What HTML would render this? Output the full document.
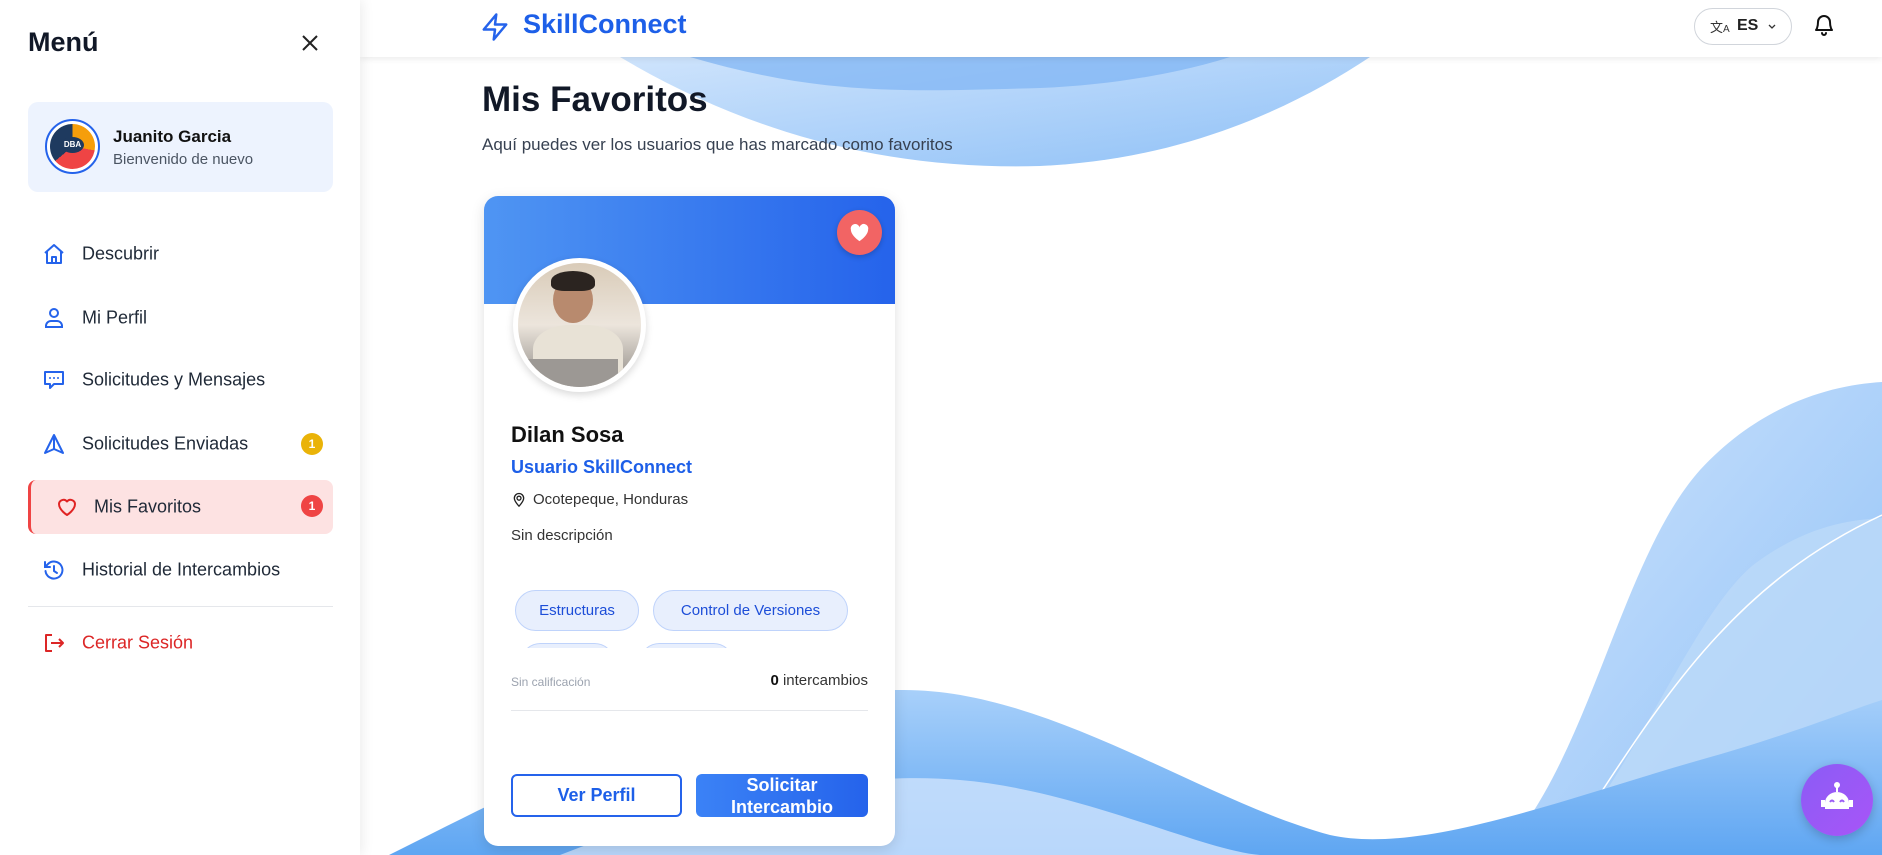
<!DOCTYPE html>
<html><head><meta charset="utf-8"><style>
*{box-sizing:border-box;margin:0;padding:0}
body{width:1882px;height:855px;overflow:hidden;background:#fff;font-family:"Liberation Sans",sans-serif;position:relative;color:#1f2937}
.abs{position:absolute}
.side{left:0;top:0;width:360px;height:855px;background:#fff;box-shadow:2px 0 12px rgba(0,0,0,.08);z-index:5}
.hdr{left:360px;top:0;width:1522px;height:57px;background:#fff;box-shadow:0 2px 6px rgba(0,0,0,.08);z-index:4}
.mi{position:absolute;left:82px;font-size:18px;color:#1f2937;transform:translateY(-50%)}
.ic{position:absolute;transform:translate(-50%,-50%)}
.badge{position:absolute;left:301px;width:22px;height:22px;border-radius:50%;color:#fff;font-size:12px;font-weight:bold;text-align:center;line-height:22px;transform:translateY(-50%)}
.tag{position:absolute;height:41px;border-radius:21px;background:#e8effd;border:1px solid #bfd3fb;color:#1d4ed8;font-size:15px;line-height:39px;text-align:center}
</style></head><body>
<svg class="abs" style="left:0;top:0" width="1882" height="855" viewBox="0 0 1882 855">
<defs>
<linearGradient id="g1" x1="0" y1="0" x2="0" y2="1"><stop offset="0" stop-color="#7fb6f5"/><stop offset="1" stop-color="#cfe4fc"/></linearGradient>
<linearGradient id="g2" x1="0" y1="0" x2="1" y2="1"><stop offset="0" stop-color="#cfe4fc"/><stop offset="1" stop-color="#8ec0f7"/></linearGradient>
<linearGradient id="g3" x1="0" y1="0" x2="0" y2="1"><stop offset="0" stop-color="#a8d0fa"/><stop offset="1" stop-color="#5fa6f2"/></linearGradient>
</defs>
<path d="M620 57 C760 140 900 170 1040 166 C1180 160 1290 110 1370 57 Z" fill="url(#g2)"/>
<path d="M690 57 C820 95 900 92 1040 88 C1120 85 1190 70 1230 57 Z" fill="#7db4f4" opacity=".7"/>
<path d="M1500 855 C1590 760 1620 560 1700 470 C1760 405 1830 385 1882 382 L1882 855 Z" fill="url(#g2)"/>
<path d="M1560 855 C1640 760 1700 600 1760 560 C1810 525 1850 520 1882 518 L1882 855 Z" fill="#bcdaf9" opacity=".8"/>
<path d="M1560 855 C1650 720 1720 590 1882 515" fill="none" stroke="#fff" stroke-width="1.5"/>
<path d="M389 855 C520 790 700 690 904 690 C1050 690 1200 800 1330 835 C1420 855 1560 800 1700 760 C1790 735 1850 710 1882 700 L1882 855 Z" fill="url(#g3)"/>
<path d="M560 855 C700 800 850 770 960 780 C1080 790 1200 850 1260 855 Z" fill="#cfe4fc" opacity=".8"/>
</svg>

<div class="abs hdr">
<svg class="abs" style="left:120px;top:11px" width="30" height="32" viewBox="0 0 24 24" fill="none" stroke="#2563eb" stroke-width="2" stroke-linejoin="round"><path d="M13 2L3 14h9l-1 8 10-12h-9l1-8z"/></svg>
<div class="abs" style="left:163px;top:9px;font-size:27px;font-weight:bold;color:#1d5fe8">SkillConnect</div>
<div class="abs" style="left:1334px;top:8px;width:98px;height:37px;border:1px solid #d1d5db;border-radius:19px">
<div class="abs" style="left:15px;top:8px;font-size:13px;color:#333">文<span style="font-size:10px">A</span></div>
<div class="abs" style="left:42px;top:8px;font-size:16px;font-weight:bold;color:#222">ES</div>
<svg class="abs" style="left:72px;top:14px" width="10" height="8" viewBox="0 0 10 8"><path d="M2 2l3 3 3-3" fill="none" stroke="#333" stroke-width="1.3"/></svg>
</div>
<svg class="abs" style="left:1452px;top:12px" width="24" height="26" viewBox="0 0 24 24" fill="none" stroke="#111" stroke-width="2" stroke-linecap="round" stroke-linejoin="round"><path d="M6 9a6 6 0 0112 0c0 6 2 8 2 8H4s2-2 2-8"/><path d="M10 20a2 2 0 004 0"/></svg>
</div>

<div class="abs side">
<div class="abs" style="left:28px;top:27px;font-size:27px;font-weight:bold;color:#111827">Menú</div>
<svg class="abs" style="left:300px;top:33px" width="20" height="20" viewBox="0 0 20 20"><path d="M3 3l14 14M17 3L3 17" stroke="#222" stroke-width="2"/></svg>
<div class="abs" style="left:28px;top:102px;width:305px;height:90px;background:#edf3fe;border-radius:10px">
<div class="abs" style="left:17px;top:17px;width:55px;height:55px;border-radius:50%;border:2px solid #2563eb;background:#fff;overflow:hidden">
<div class="abs" style="left:3px;top:3px;width:45px;height:45px;border-radius:50%;background:conic-gradient(#f59e0b 0 100deg,#ef4444 100deg 230deg,#1e3a5f 230deg 360deg)"></div>
<div class="abs" style="left:14px;top:16px;width:23px;height:16px;border-radius:50%;background:#1e3a5f;color:#fff;font-size:8px;font-weight:bold;text-align:center;line-height:16px">DBA</div>
</div>
<div class="abs" style="left:85px;top:25px;font-size:17px;font-weight:bold;color:#111">Juanito Garcia</div>
<div class="abs" style="left:85px;top:49px;font-size:15px;color:#4b5563">Bienvenido de nuevo</div>
</div>

<svg class="ic" style="left:54px;top:254px" width="24" height="24" viewBox="0 0 24 24" fill="none" stroke="#2563eb" stroke-width="2" stroke-linejoin="round"><path d="M3 11l9-8 9 8M5 9v12h14V9M10 21v-6h4v6"/></svg>
<div class="mi" style="top:254px">Descubrir</div>
<svg class="ic" style="left:54px;top:318px" width="24" height="24" viewBox="0 0 24 24" fill="none" stroke="#2563eb" stroke-width="2"><circle cx="12" cy="7" r="4"/><path d="M4 21v-1a5 5 0 015-5h6a5 5 0 015 5v1z"/></svg>
<div class="mi" style="top:318px">Mi Perfil</div>
<svg class="ic" style="left:54px;top:380px" width="24" height="24" viewBox="0 0 24 24" fill="none" stroke="#2563eb" stroke-width="2" stroke-linejoin="round"><path d="M3 4h18v12h-9l-4 4v-4H3z"/><path d="M8 10h.01M12 10h.01M16 10h.01" stroke-linecap="round"/></svg>
<div class="mi" style="top:380px">Solicitudes y Mensajes</div>
<svg class="ic" style="left:54px;top:444px" width="24" height="24" viewBox="0 0 24 24" fill="none" stroke="#2563eb" stroke-width="2" stroke-linejoin="round"><path d="M12 3L3 21l9-4 9 4z"/><path d="M12 3v14"/></svg>
<div class="mi" style="top:444px">Solicitudes Enviadas</div>
<div class="badge" style="top:444px;background:#eab308">1</div>

<div class="abs" style="left:28px;top:480px;width:305px;height:54px;background:#fde2e2;border-radius:8px;border-left:3px solid #ef4444"></div>
<svg class="ic" style="left:67px;top:507px" width="26" height="24" viewBox="0 0 24 24" fill="none" stroke="#e02424" stroke-width="2" stroke-linejoin="round"><path d="M12 20s-8-5-8-11a4.5 4.5 0 018-2.5A4.5 4.5 0 0120 9c0 6-8 11-8 11z"/></svg>
<div class="mi" style="top:507px;left:94px">Mis Favoritos</div>
<div class="badge" style="top:506px;background:#ef4444">1</div>

<svg class="ic" style="left:54px;top:570px" width="24" height="24" viewBox="0 0 24 24" fill="none" stroke="#2563eb" stroke-width="2" stroke-linecap="round"><path d="M3.5 13A8.5 8.5 0 1 0 6 6L3 9"/><path d="M3 4v5h5"/><path d="M12 8v5l3 2"/></svg>
<div class="mi" style="top:570px">Historial de Intercambios</div>
<div class="abs" style="left:28px;top:606px;width:305px;height:1px;background:#e5e7eb"></div>
<svg class="ic" style="left:54px;top:643px" width="24" height="24" viewBox="0 0 24 24" fill="none" stroke="#dc2626" stroke-width="2" stroke-linejoin="round"><path d="M10 4H4v16h6"/><path d="M9 12h12M17 8l4 4-4 4"/></svg>
<div class="mi" style="top:643px;color:#dc2626">Cerrar Sesión</div>
</div>

<div class="abs" style="left:482px;top:80px;font-size:35px;font-weight:bold;color:#111827">Mis Favoritos</div>
<div class="abs" style="left:482px;top:135px;font-size:17px;color:#374151">Aquí puedes ver los usuarios que has marcado como favoritos</div>

<div class="abs" style="left:484px;top:196px;width:411px;height:650px;background:#fff;border-radius:14px;box-shadow:0 4px 14px rgba(0,0,0,.12);overflow:hidden">
<div class="abs" style="left:0;top:0;width:411px;height:108px;background:linear-gradient(90deg,#4f95f3,#2563eb)"></div>
<div class="abs" style="left:353px;top:14px;width:45px;height:45px;border-radius:50%;background:#f26464;box-shadow:0 2px 6px rgba(0,0,0,.2)">
<svg class="abs" style="left:12px;top:13px" width="21" height="19" viewBox="0 0 24 22"><path d="M12 21S2 14.5 2 7.5A5 5 0 0112 5a5 5 0 0110 2.5C22 14.5 12 21 12 21z" fill="#fff"/></svg></div>
<div class="abs" style="left:29px;top:62px;width:133px;height:134px;border-radius:50%;background:#fff;box-shadow:0 3px 8px rgba(0,0,0,.15)">
<div class="abs" style="left:5px;top:5px;width:123px;height:124px;border-radius:50%;overflow:hidden;background:linear-gradient(180deg,#d9cbb8 0%,#ece5dc 50%,#a8a39d 85%)">
<div class="abs" style="left:35px;top:14px;width:40px;height:46px;border-radius:50%;background:#b88a6e"></div>
<div class="abs" style="left:33px;top:8px;width:44px;height:20px;border-radius:50% 50% 30% 30%;background:#2b2420"></div>
<div class="abs" style="left:15px;top:62px;width:90px;height:60px;border-radius:40% 40% 0 0;background:#e8e2d6"></div>
<div class="abs" style="left:10px;top:96px;width:90px;height:30px;background:#9c9894"></div>
</div></div>
<div class="abs" style="left:27px;top:226px;font-size:22px;font-weight:bold;color:#111">Dilan Sosa</div>
<div class="abs" style="left:27px;top:261px;font-size:18px;font-weight:bold;color:#1d5fe8">Usuario SkillConnect</div>
<svg class="abs" style="left:27px;top:295px" width="16" height="17" viewBox="0 0 24 24" fill="none" stroke="#222" stroke-width="2"><path d="M12 22s-7-7-7-12a7 7 0 0114 0c0 5-7 12-7 12z"/><circle cx="12" cy="10" r="3"/></svg>
<div class="abs" style="left:49px;top:295px;font-size:15px;color:#333">Ocotepeque, Honduras</div>
<div class="abs" style="left:27px;top:331px;font-size:15px;color:#333">Sin descripción</div>
<div class="abs" style="left:0;top:390px;width:411px;height:62px;overflow:hidden">
<div class="tag" style="left:31px;top:4px;width:124px">Estructuras</div>
<div class="tag" style="left:169px;top:4px;width:195px">Control de Versiones</div>
<div class="tag" style="left:36px;top:57px;width:95px"></div>
<div class="tag" style="left:155px;top:57px;width:95px"></div>
</div>
<div class="abs" style="left:27px;top:479px;font-size:12px;color:#9ca3af">Sin calificación</div>
<div class="abs" style="right:27px;top:476px;font-size:15px;color:#333"><b style="color:#111">0</b> intercambios</div>
<div class="abs" style="left:27px;top:514px;width:357px;height:1px;background:#e5e7eb"></div>
<div class="abs" style="left:27px;top:578px;width:171px;height:43px;border:2px solid #2563eb;border-radius:6px;color:#1d5fe8;font-size:18px;font-weight:bold;text-align:center;line-height:39px">Ver Perfil</div>
<div class="abs" style="left:212px;top:578px;width:172px;height:43px;border-radius:6px;background:linear-gradient(90deg,#3b82f6,#2563eb);color:#fff;font-size:18px;font-weight:bold;text-align:center;line-height:22px;overflow:hidden;padding-top:0">Solicitar<br>Intercambio</div>
</div>

<div class="abs" style="left:1801px;top:764px;width:72px;height:72px;border-radius:50%;background:linear-gradient(135deg,#8b5cf6,#a855f7);box-shadow:0 3px 10px rgba(0,0,0,.2)">
<svg class="abs" style="left:20px;top:17px" width="32" height="36" viewBox="0 0 32 36"><circle cx="16" cy="4" r="3" fill="#fff"/><rect x="15" y="5" width="2" height="6" fill="#fff"/><path d="M4 22a12 11 0 0124 0v6H4z" fill="#fff"/><rect x="0" y="19" width="4" height="7" fill="#fff"/><rect x="28" y="19" width="4" height="7" fill="#fff"/><path d="M9 21q2-3 4 0M19 21q2-3 4 0" stroke="#9b5cf5" stroke-width="2" fill="none"/></svg>
</div>
</body></html>
